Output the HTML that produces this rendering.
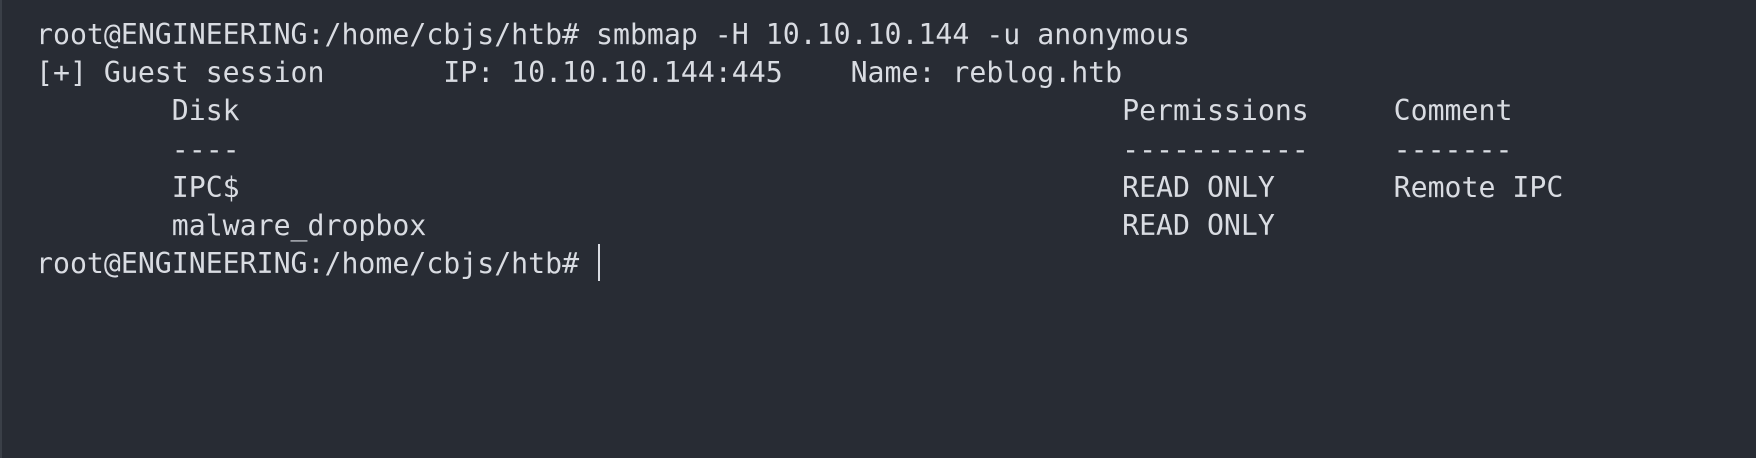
<!DOCTYPE html>
<html><head><meta charset="utf-8"><style>
html,body{margin:0;padding:0;}
body{width:1756px;height:458px;background:#282c34;overflow:hidden;position:relative;border-left:2px solid #3a3f47;box-sizing:border-box;}
pre{position:absolute;left:34px;top:16px;margin:0;font-family:"DejaVu Sans Mono","Liberation Mono",monospace;font-size:28.2px;line-height:38.2px;color:#d9dce2;}
.cur{position:absolute;left:596px;top:244px;width:2px;height:37px;background:#d9dce2;}
</style></head><body>
<pre>root@ENGINEERING:/home/cbjs/htb# smbmap -H 10.10.10.144 -u anonymous
[+] Guest session       IP: 10.10.10.144:445    Name: reblog.htb
        Disk                                                    Permissions     Comment
        ----                                                    -----------     -------
        IPC$                                                    READ ONLY       Remote IPC
        malware_dropbox                                         READ ONLY
root@ENGINEERING:/home/cbjs/htb# </pre>
<div class="cur"></div>
</body></html>
